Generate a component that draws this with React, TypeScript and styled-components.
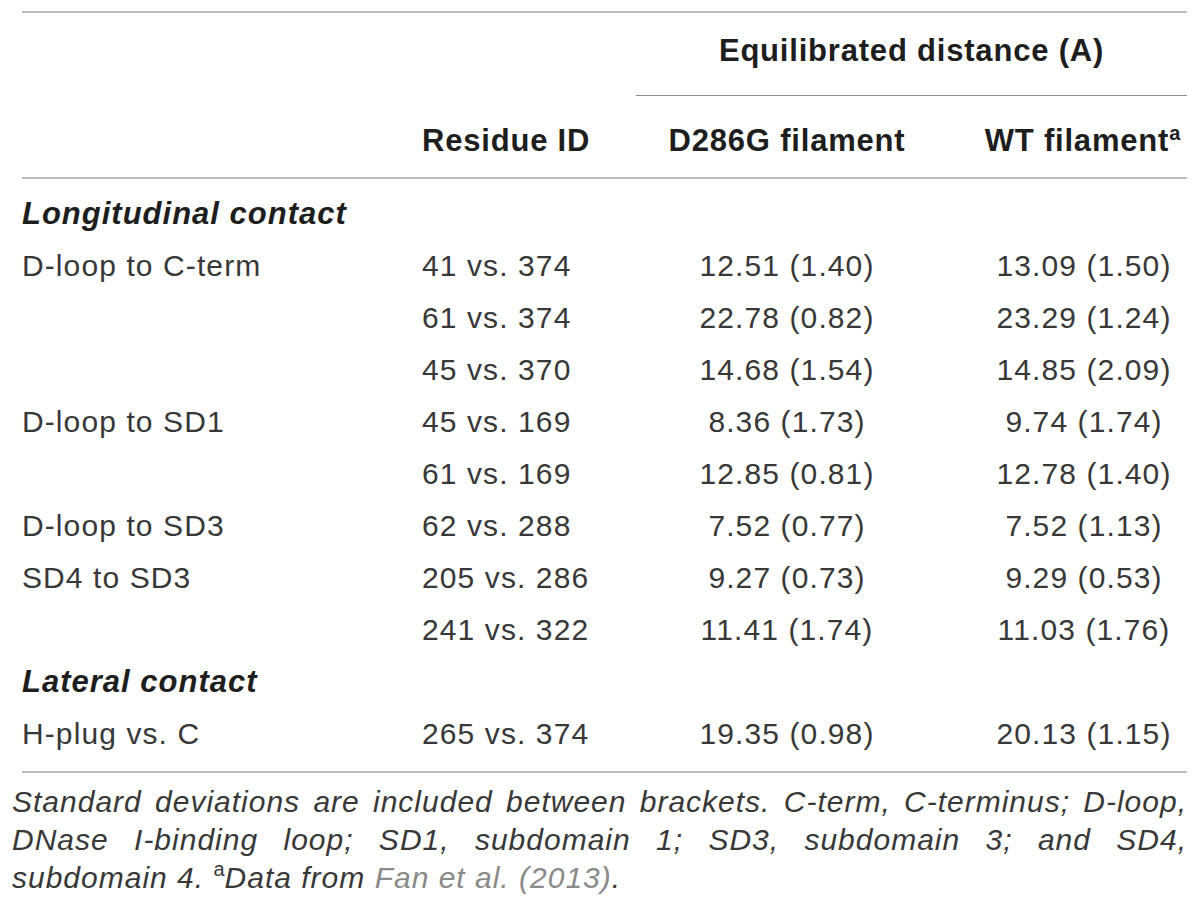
import styled, { createGlobalStyle } from 'styled-components';

const GlobalStyle = createGlobalStyle`
  html, body {
    margin: 0;
    padding: 0;
    background: #fff;
  }
  body {
    font-family: "Liberation Sans", Arial, Helvetica, sans-serif;
    color: #2e2e2e;
  }
`;

type Align = 'left' | 'center' | 'shift';

interface DataRow {
  region?: string;
  residues: string;
  mutant: string;
  wild: string;
}

const longitudinal: DataRow[] = [
  { region: 'D-loop to C-term', residues: '41 vs. 374', mutant: '12.51 (1.40)', wild: '13.09 (1.50)' },
  { residues: '61 vs. 374', mutant: '22.78 (0.82)', wild: '23.29 (1.24)' },
  { residues: '45 vs. 370', mutant: '14.68 (1.54)', wild: '14.85 (2.09)' },
  { region: 'D-loop to SD1', residues: '45 vs. 169', mutant: '8.36 (1.73)', wild: '9.74 (1.74)' },
  { residues: '61 vs. 169', mutant: '12.85 (0.81)', wild: '12.78 (1.40)' },
  { region: 'D-loop to SD3', residues: '62 vs. 288', mutant: '7.52 (0.77)', wild: '7.52 (1.13)' },
  { region: 'SD4 to SD3', residues: '205 vs. 286', mutant: '9.27 (0.73)', wild: '9.29 (0.53)' },
  { residues: '241 vs. 322', mutant: '11.41 (1.74)', wild: '11.03 (1.76)' },
];

const lateral: DataRow[] = [
  { region: 'H-plug vs. C', residues: '265 vs. 374', mutant: '19.35 (0.98)', wild: '20.13 (1.15)' },
];

const Page = styled.div`
  box-sizing: border-box;
  width: 1200px;
  padding: 11px 13px 0 12px;
`;

const Table = styled.div`
  margin-left: 10px;
  width: 1165px;
`;

const Head = styled.div`
  display: grid;
  grid-template-columns: 400px 214px 302px 249px;
  border-top: 2px solid #bdbdbd;
  border-bottom: 2px solid #bdbdbd;
`;

const GroupTitle = styled.div`
  grid-column: 3 / 5;
  height: 82px;
  line-height: 76px;
  border-bottom: 1px solid #8c8c8c;
  text-align: center;
  font-size: 31px;
  font-weight: 700;
  letter-spacing: 0.8px;
  color: #1e1e1e;
  white-space: nowrap;
`;

const Spacer = styled.div`
  grid-column: 1 / 3;
`;

const HeadCell = styled.div<{ $align: Align }>`
  height: 81px;
  box-sizing: border-box;
  padding-top: 9px;
  line-height: 72px;
  font-size: 31px;
  font-weight: 700;
  letter-spacing: 0.8px;
  color: #1e1e1e;
  white-space: nowrap;
  text-align: ${(p) => (p.$align === 'left' ? 'left' : 'center')};
  padding-left: ${(p) => (p.$align === 'shift' ? '40px' : '0')};
`;

const Sup = styled.sup`
  font-size: 20px;
  line-height: 0;
  vertical-align: 11px;
  letter-spacing: 0;
`;

const Body = styled.div`
  padding: 9px 0 11px;
  border-bottom: 2px solid #bdbdbd;
`;

const Row = styled.div`
  display: grid;
  grid-template-columns: 400px 214px 302px 249px;
  height: 52px;
`;

const Section = styled.div`
  grid-column: 1 / 5;
  line-height: 52px;
  font-size: 31px;
  font-weight: 700;
  font-style: italic;
  letter-spacing: 1px;
  color: #1e1e1e;
`;

const Cell = styled.div<{ $align: Align }>`
  line-height: 52px;
  font-size: 30px;
  letter-spacing: 1.1px;
  color: #383838;
  white-space: nowrap;
  text-align: ${(p) => (p.$align === 'left' ? 'left' : 'center')};
  padding-left: ${(p) => (p.$align === 'shift' ? '43px' : '0')};
`;

const Footnote = styled.div`
  margin-top: 10px;
  font-size: 30px;
  font-style: italic;
  letter-spacing: 1px;
  color: #383838;
`;

const FootLine = styled.div<{ $justify?: boolean }>`
  line-height: 38px;
  text-align: ${(p) => (p.$justify ? 'justify' : 'left')};
  text-align-last: ${(p) => (p.$justify ? 'justify' : 'left')};
  white-space: ${(p) => (p.$justify ? 'normal' : 'nowrap')};
`;

const FootSup = styled.sup`
  font-size: 20px;
  font-style: normal;
  line-height: 0;
  vertical-align: 12px;
  letter-spacing: 0;
`;

const Cite = styled.a`
  color: #8a8a8a;
  text-decoration: none;
`;

const renderRows = (rows: DataRow[]) =>
  rows.map((row, i) => (
    <Row key={row.residues + i}>
      <Cell $align="left">{row.region ?? ''}</Cell>
      <Cell $align="left">{row.residues}</Cell>
      <Cell $align="center">{row.mutant}</Cell>
      <Cell $align="shift">{row.wild}</Cell>
    </Row>
  ));

const App = function() {
  return (
    <>
      <GlobalStyle />
      <Page>
        <Table>
          <Head>
            <Spacer />
            <GroupTitle>Equilibrated distance (A)</GroupTitle>
            <HeadCell $align="left"></HeadCell>
            <HeadCell $align="left">Residue ID</HeadCell>
            <HeadCell $align="center">D286G filament</HeadCell>
            <HeadCell $align="shift">
              WT filament<Sup>a</Sup>
            </HeadCell>
          </Head>
          <Body>
            <Row>
              <Section>Longitudinal contact</Section>
            </Row>
            {renderRows(longitudinal)}
            <Row>
              <Section>Lateral contact</Section>
            </Row>
            {renderRows(lateral)}
          </Body>
        </Table>
        <Footnote>
          <FootLine $justify>
            Standard deviations are included between brackets. C-term, C-terminus; D-loop,
          </FootLine>
          <FootLine $justify>
            DNase I-binding loop; SD1, subdomain 1; SD3, subdomain 3; and SD4,
          </FootLine>
          <FootLine>
            subdomain 4. <FootSup>a</FootSup>Data from <Cite href="#">Fan et al. (2013)</Cite>.
          </FootLine>
        </Footnote>
      </Page>
    </>
  );
};

export default App;
